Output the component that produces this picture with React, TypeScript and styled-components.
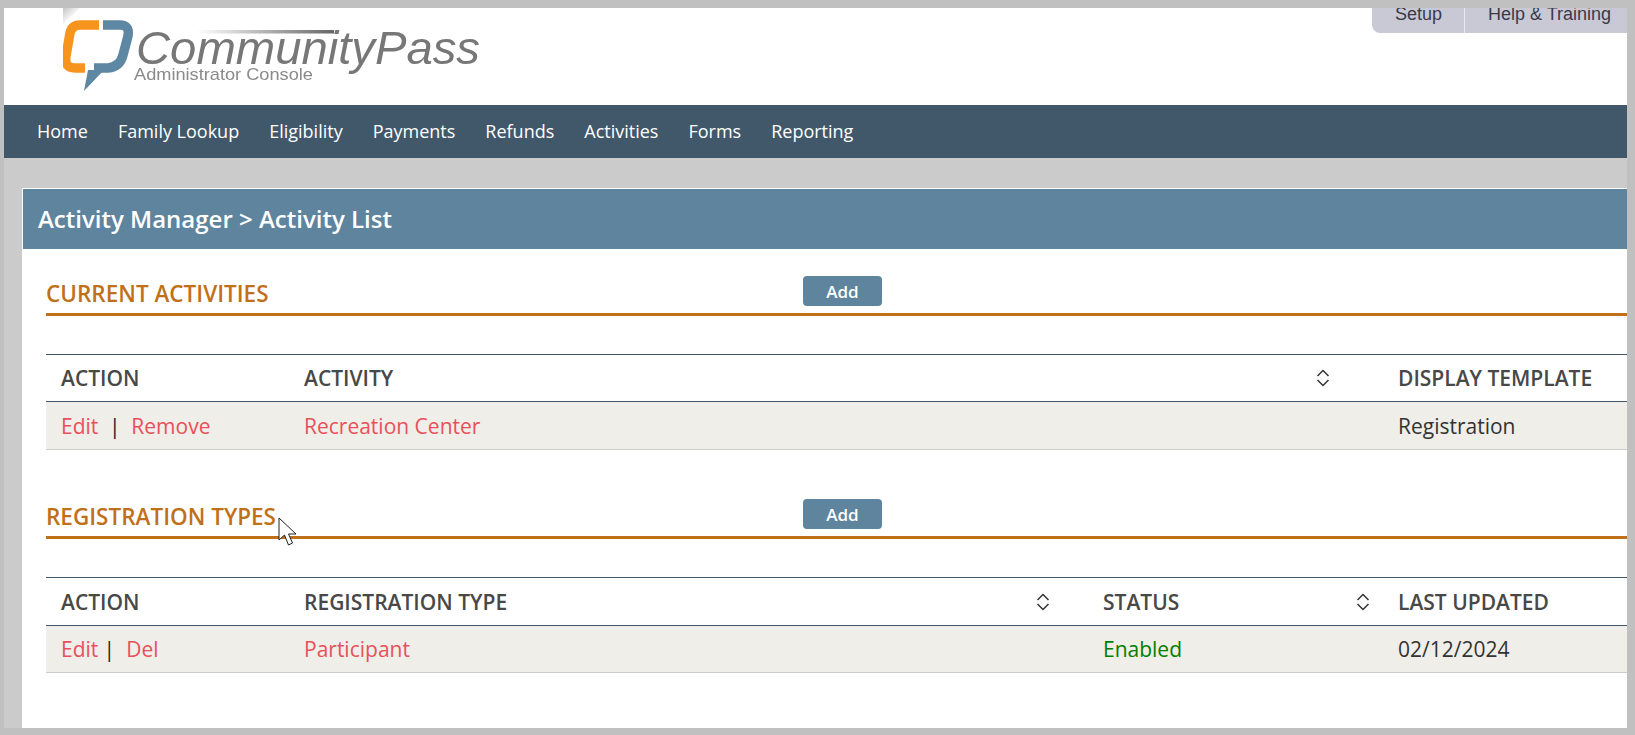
import React from "react";
import styled, { createGlobalStyle } from "styled-components";

const Global = createGlobalStyle`
  html, body { margin: 0; padding: 0; height: 100%; overflow: hidden; background: #c0c0c0; }
  body { font-family: "Open Sans", "Liberation Sans", sans-serif; }
  * { box-sizing: border-box; }
`;

const Frame = styled.div`
  position: relative;
  width: 1635px;
  height: 735px;
  padding: 8px 8px 7px 4px;
  overflow: hidden;
`;
const Screen = styled.div`
  width: 1623px;
  height: 720px;
  overflow: hidden;
  display: flex;
  flex-direction: column;
  background: #cbcbcb;
`;
const Header = styled.header`
  flex: 0 0 97px;
  display: flex;
  justify-content: space-between;
  align-items: flex-start;
  background: #fff;
`;
const LogoSvg = styled.svg`
  display: block;
  width: 490px;
  height: 97px;
`;
const LogoArt = styled.g`
  filter: blur(0.45px);
`;
const Tabs = styled.nav`
  display: flex;
  height: 25px;
  width: 255px;
  background: #c9c9d6;
  border-bottom-left-radius: 8px;
  overflow: hidden;
  font-family: "Liberation Sans", Arial, sans-serif;
  font-size: 18px;
  line-height: 13px;
  color: #3a3a48;
`;
const Tab = styled.a<{ $w: number; $pad: number }>`
  flex: 0 0 ${(p) => p.$w}px;
  height: 25px;
  padding-left: ${(p) => p.$pad}px;
  white-space: nowrap;
  & + & { border-left: 1px solid #e8e8ee; }
`;
const NavBar = styled.nav`
  flex: 0 0 53px;
  display: flex;
  align-items: center;
  gap: 30px;
  padding: 0 0 2px 33px;
  background: #41586b;
  color: #fff;
  font-size: 18px;
`;
const NavItem = styled.a`
  white-space: nowrap;
`;
const Main = styled.main`
  flex: 1;
  padding: 30px 0 0 18px;
  min-height: 0;
`;
const Panel = styled.section`
  width: 1670px;
  height: 540px;
  background: #fff;
  border-top: 1px solid #fff;
  border-left: 1px solid #fff;
`;
const PanelHead = styled.div`
  height: 60px;
  display: flex;
  justify-content: space-between;
  align-items: center;
  padding: 0 26px 2px 15px;
  background: #5e849e;
  color: #fff;
  font-size: 24px;
  font-weight: 600;
`;
const HelpLink = styled.a`
  font-family: "Liberation Sans", Arial, sans-serif;
  font-size: 17px;
  font-weight: 400;
`;
const Body = styled.div`
  padding: 27px 0 0 23px;
`;
const Block = styled.div`
  & + & { margin-top: 49px; }
`;
const SectionHead = styled.div`
  display: grid;
  grid-template-columns: 757px auto;
  justify-content: start;
  align-items: end;
  height: 40px;
  border-bottom: 3px solid #c07018;
`;
const SectionTitle = styled.h2`
  margin: 0 0 4px;
  font-size: 22.5px;
  font-weight: 600;
  line-height: 30px;
  color: #c07018;
  text-transform: uppercase;
`;
const AddButton = styled.button`
  width: 79px;
  height: 30px;
  margin-bottom: 7px;
  padding: 0;
  border: 0;
  border-radius: 4px;
  background: #5e849e;
  color: #fff;
  font-family: inherit;
  font-size: 17px;
  font-weight: 600;
`;
const Table = styled.table<{ $head: number; $row: number }>`
  table-layout: fixed;
  width: 1620px;
  margin-top: 38px;
  border-collapse: collapse;
  th { height: ${(p) => p.$head}px; }
  td { height: ${(p) => p.$row}px; }
`;
const HeadCell = styled.th<{ $gap?: number }>`
  padding: 0 ${(p) => p.$gap ?? 0}px 0 15px;
  border-top: 1px solid #41586b;
  border-bottom: 1px solid #41586b;
  text-align: left;
  color: #484848;
  font-size: 21px;
  font-weight: 600;
  text-transform: uppercase;
`;
const HeadInner = styled.div`
  display: flex;
  justify-content: space-between;
  align-items: center;
`;
const Cell = styled.td`
  padding: 0 0 0 15px;
  background: #efeee9;
  border-bottom: 1px solid #ccc;
  font-size: 21px;
  color: #333;
  white-space: nowrap;
`;
const RedLink = styled.a`
  color: #e8515a;
`;
const Pipe = styled.span<{ $w: number; $shift?: number }>`
  display: inline-block;
  width: ${(p) => p.$w}px;
  padding-right: ${(p) => p.$shift ?? 0}px;
  text-align: center;
  color: #222;
`;
const Enabled = styled.span`
  color: #008000;
`;
const Cursor = styled.svg`
  position: absolute;
  left: 278px;
  top: 517px;
  width: 20px;
  height: 30px;
`;

const SortIcon = () => (
  <svg width="14" height="18" viewBox="0 0 14 18" fill="none" stroke="#333" strokeWidth="1.5">
    <path d="M1.5 7 L7 1.5 L12.5 7" />
    <path d="M1.5 11 L7 16.5 L12.5 11" />
  </svg>
);

const Logo = () => (
  <LogoSvg viewBox="4 8 490 97" aria-label="CommunityPass Administrator Console">
    <defs>
      <linearGradient id="rule" x1="0" x2="1" y1="0" y2="0">
        <stop offset="0" stopColor="#ffffff" />
        <stop offset="1" stopColor="#666666" />
      </linearGradient>
      <linearGradient id="corner" x1="0" x2="1" y1="0" y2="1">
        <stop offset="0" stopColor="#c4c4c4" />
        <stop offset="0.6" stopColor="#ffffff" />
      </linearGradient>
      <clipPath id="logoClip">
        <rect x="63" y="8" width="430" height="90" />
      </clipPath>
    </defs>
    <polygon points="63,8 80,8 63,24" fill="url(#corner)" />
    <LogoArt>
      <g clipPath="url(#logoClip)">
        <path d="M99 25 H80 Q72 25 70 33 L66 56 Q64 68 75 68 H85" fill="none" stroke="#f7941e" strokeWidth="9.5" />
        <path d="M103 25 H120 Q130 25 128 36 L123 55 Q120 67 108 68 H94" fill="none" stroke="#5e87a3" strokeWidth="9.5" />
        <path d="M88 70 L84 91 L104 70 Z" fill="#5e87a3" />
      </g>
      <rect x="197" y="30" width="137" height="3.5" fill="url(#rule)" />
      <text x="136" y="64" fontFamily="Liberation Sans, Arial, sans-serif" fontStyle="italic" fontSize="46" fill="#777777" textLength="344" lengthAdjust="spacingAndGlyphs">
        CommunityPass
      </text>
      <text x="134" y="80" fontFamily="Liberation Sans, Arial, sans-serif" fontSize="17" fill="#8a8a8a" textLength="179" lengthAdjust="spacingAndGlyphs">
        Administrator Console
      </text>
    </LogoArt>
  </LogoSvg>
);

const navItems = ["Home", "Family Lookup", "Eligibility", "Payments", "Refunds", "Activities", "Forms", "Reporting"];

export default function App() {
  return (
    <Frame>
      <Global />
      <Screen>
        <Header>
          <Logo />
          <Tabs>
            <Tab $w={92} $pad={23}>Setup</Tab>
            <Tab $w={163} $pad={23}>Help &amp; Training</Tab>
          </Tabs>
        </Header>
        <NavBar>
          {navItems.map((n) => (
            <NavItem key={n}>{n}</NavItem>
          ))}
        </NavBar>
        <Main>
          <Panel>
            <PanelHead>
              <span>Activity Manager &gt; Activity List</span>
              <HelpLink>Help</HelpLink>
            </PanelHead>
            <Body>
              <Block>
                <SectionHead>
                  <SectionTitle>Current Activities</SectionTitle>
                  <AddButton>Add</AddButton>
                </SectionHead>
                <Table $head={47} $row={48}>
                  <colgroup>
                    <col width="243" />
                    <col width="1094" />
                    <col />
                  </colgroup>
                  <thead>
                    <tr>
                      <HeadCell>Action</HeadCell>
                      <HeadCell $gap={53}>
                        <HeadInner>
                          Activity
                          <SortIcon />
                        </HeadInner>
                      </HeadCell>
                      <HeadCell>Display Template</HeadCell>
                    </tr>
                  </thead>
                  <tbody>
                    <tr>
                      <Cell>
                        <RedLink>Edit</RedLink>
                        <Pipe $w={33}>|</Pipe>
                        <RedLink>Remove</RedLink>
                      </Cell>
                      <Cell>
                        <RedLink>Recreation Center</RedLink>
                      </Cell>
                      <Cell>Registration</Cell>
                    </tr>
                  </tbody>
                </Table>
              </Block>
              <Block>
                <SectionHead>
                  <SectionTitle>Registration Types</SectionTitle>
                  <AddButton>Add</AddButton>
                </SectionHead>
                <Table $head={48} $row={47}>
                  <colgroup>
                    <col width="243" />
                    <col width="799" />
                    <col width="295" />
                    <col />
                  </colgroup>
                  <thead>
                    <tr>
                      <HeadCell>Action</HeadCell>
                      <HeadCell $gap={38}>
                        <HeadInner>
                          Registration Type
                          <SortIcon />
                        </HeadInner>
                      </HeadCell>
                      <HeadCell $gap={13}>
                        <HeadInner>
                          Status
                          <SortIcon />
                        </HeadInner>
                      </HeadCell>
                      <HeadCell>Last Updated</HeadCell>
                    </tr>
                  </thead>
                  <tbody>
                    <tr>
                      <Cell>
                        <RedLink>Edit</RedLink>
                        <Pipe $w={28} $shift={6}>|</Pipe>
                        <RedLink>Del</RedLink>
                      </Cell>
                      <Cell>
                        <RedLink>Participant</RedLink>
                      </Cell>
                      <Cell>
                        <Enabled>Enabled</Enabled>
                      </Cell>
                      <Cell>02/12/2024</Cell>
                    </tr>
                  </tbody>
                </Table>
              </Block>
            </Body>
          </Panel>
        </Main>
      </Screen>
      <Cursor viewBox="0 0 20 30">
        <path d="M1 1 L1 23 L6.5 18 L10.5 28 L14.5 26 L10.5 17 L18 17 Z" fill="#fff" stroke="#222" strokeWidth="1" />
      </Cursor>
    </Frame>
  );
}
